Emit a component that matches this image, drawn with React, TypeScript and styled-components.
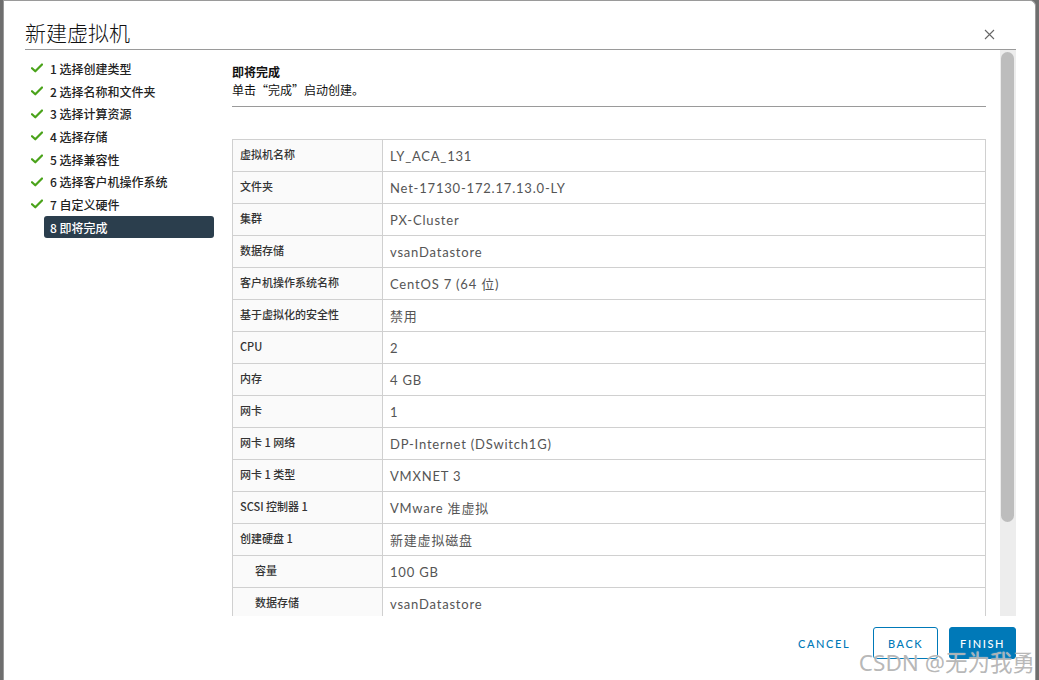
import React from "react";
import styled, { createGlobalStyle } from "styled-components";

const Global = createGlobalStyle`
  html, body { margin: 0; padding: 0; }
  body {
    background: #6e6e6e;
    font-family: "Noto Sans", "Noto Sans CJK SC", sans-serif;
    width: 1039px; height: 680px; overflow: hidden;
  }
`;

const Page = styled.div`
  display: flex;
  height: 680px;
  padding: 0 3px 0 3px;
  box-sizing: border-box;
`;

const Modal = styled.div`
  position: relative;
  flex: 1;
  background: #fff;
  border: 1px solid #9a9a9a;
  border-bottom: none;
  border-radius: 0 6px 0 0;
  display: flex;
  flex-direction: column;
  box-sizing: border-box;
  overflow: hidden;
`;

const Header = styled.div`
  margin: 0 19px 0 21px;
  height: 48px;
  border-bottom: 1px solid #9a9a9a;
  display: flex;
  align-items: flex-end;
  justify-content: space-between;
`;

const Title = styled.h1`
  margin: 0 0 2px 0;
  font-family: "Noto Sans CJK SC", sans-serif;
  font-weight: 300;
  font-size: 21px;
  line-height: 30px;
  color: #111;
`;

const Close = styled.button`
  border: none;
  background: none;
  padding: 0;
  margin: 0 20px 8px 0;
  width: 12px;
  height: 12px;
  display: flex;
  cursor: pointer;
`;

const Body = styled.div`
  display: flex;
  height: 566px;
  padding-right: 19px;
`;

const Nav = styled.ul`
  list-style: none;
  margin: 0;
  padding: 7px 0 0 27px;
  width: 183px;
  flex: none;
`;

const NavItem = styled.li<{ $active?: boolean }>`
  display: flex;
  align-items: center;
  gap: 7px;
  height: 22.7px;
  font-family: "Noto Sans CJK SC", sans-serif;
  font-size: 12px;
  font-weight: 500;
  color: ${(p) => (p.$active ? "#fff" : "#222")};
`;

const Check = styled.span`
  width: 12px;
  display: flex;
  justify-content: center;
`;

const ActiveLabel = styled.span`
  flex: 1;
  margin-left: -6px;
  background: #2b3e4d;
  border-radius: 3px;
  height: 22px;
  display: flex;
  align-items: center;
  padding-left: 6px;
`;

const Scroll = styled.div`
  flex: 1;
  overflow: hidden;
  padding: 0 14px 0 18px;
`;

const Track = styled.div`
  flex: none;
  width: 16px;
  background: #ededed;
  padding: 2px 2px 0 1px;
  box-sizing: border-box;
`;

const Thumb = styled.div`
  height: 470px;
  background: #bdbdbd;
  border-radius: 7px;
`;

const Intro = styled.div`
  padding-top: 13px;
  border-bottom: 1px solid #9a9a9a;
  padding-bottom: 7px;
  margin-bottom: 32px;
  font-family: "Noto Sans CJK SC", sans-serif;
  font-size: 12px;
  color: #111;
`;

const IntroTitle = styled.div`
  font-weight: 600;
  line-height: 18px;
`;

const IntroText = styled.div`
  line-height: 18px;
`;

const Table = styled.table`
  width: 100%;
  border-collapse: collapse;
  border: 1px solid #d0d0d0;
  margin-bottom: 20px;
`;

const Row = styled.tr`
  height: 32px;
`;

const Label = styled.td<{ $indent?: boolean }>`
  width: 150px;
  box-sizing: border-box;
  background: #fafafa;
  border: 1px solid #d0d0d0;
  padding: 0 0 4px ${(p) => (p.$indent ? "22px" : "7px")};
  font-family: "Noto Sans CJK SC", sans-serif;
  font-size: 11px;
  font-weight: 500;
  color: #333;
`;

const Value = styled.td`
  border: 1px solid #d0d0d0;
  padding: 0 0 0 7px;
  font-family: "Lato", "Noto Sans CJK SC", sans-serif;
  font-size: 13px;
  letter-spacing: 0.8px;
  color: #555;
`;

const Footer = styled.div`
  display: flex;
  justify-content: flex-end;
  align-items: flex-start;
  gap: 11px;
  padding: 11px 19px 0 0;
`;

const Btn = styled.button<{ $variant: "flat" | "outline" | "solid" }>`
  height: 32px;
  padding: 0 10px;
  border-radius: 3px;
  font-family: "Lato", "Noto Sans", sans-serif;
  font-size: 11px;
  font-weight: 500;
  letter-spacing: 1.6px;
  cursor: pointer;
  border: 1px solid ${(p) => (p.$variant === "flat" ? "transparent" : "#0079b8")};
  background: ${(p) => (p.$variant === "solid" ? "#0079b8" : "#fff")};
  color: ${(p) => (p.$variant === "solid" ? "#fff" : "#0079b8")};
  min-width: ${(p) => (p.$variant === "flat" ? "76px" : "65px")};
`;

const Watermark = styled.div`
  position: absolute;
  right: 0px;
  bottom: 4px;
  font-family: "Noto Sans", "Noto Sans CJK SC", sans-serif;
  font-size: 22.5px;
  line-height: 26px;
  color: rgba(165, 165, 165, 0.8);
  text-shadow: 0 0 1px rgba(255,255,255,0.9);
  pointer-events: none;
  white-space: nowrap;
`;

const steps = [
  "1 选择创建类型",
  "2 选择名称和文件夹",
  "3 选择计算资源",
  "4 选择存储",
  "5 选择兼容性",
  "6 选择客户机操作系统",
  "7 自定义硬件",
];

const rows: { k: string; v: string; indent?: boolean }[] = [
  { k: "虚拟机名称", v: "LY_ACA_131" },
  { k: "文件夹", v: "Net-17130-172.17.13.0-LY" },
  { k: "集群", v: "PX-Cluster" },
  { k: "数据存储", v: "vsanDatastore" },
  { k: "客户机操作系统名称", v: "CentOS 7 (64 位)" },
  { k: "基于虚拟化的安全性", v: "禁用" },
  { k: "CPU", v: "2" },
  { k: "内存", v: "4 GB" },
  { k: "网卡", v: "1" },
  { k: "网卡 1 网络", v: "DP-Internet (DSwitch1G)" },
  { k: "网卡 1 类型", v: "VMXNET 3" },
  { k: "SCSI 控制器 1", v: "VMware 准虚拟" },
  { k: "创建硬盘 1", v: "新建虚拟磁盘" },
  { k: "容量", v: "100 GB", indent: true },
  { k: "数据存储", v: "vsanDatastore", indent: true },
];

const CheckIcon = () => (
  <svg width="12" height="10" viewBox="0 0 12 10">
    <path d="M1 5.2 L4.3 8.3 L11 1.5" fill="none" stroke="#4aa31a" strokeWidth="2.2" strokeLinecap="round" strokeLinejoin="round" />
  </svg>
);

export default function App() {
  return (
    <>
      <Global />
      <Page>
        <Modal>
          <Header>
            <Title>新建虚拟机</Title>
            <Close aria-label="close">
              <svg width="11" height="11" viewBox="0 0 11 11">
                <path d="M1 1 L10 10 M10 1 L1 10" stroke="#666" strokeWidth="1.1" />
              </svg>
            </Close>
          </Header>
          <Body>
            <Nav>
              {steps.map((s) => (
                <NavItem key={s}>
                  <Check><CheckIcon /></Check>
                  <span>{s}</span>
                </NavItem>
              ))}
              <NavItem $active>
                <Check />
                <ActiveLabel>8 即将完成</ActiveLabel>
              </NavItem>
            </Nav>
            <Scroll>
              <Intro>
                <IntroTitle>即将完成</IntroTitle>
                <IntroText>单击“完成”启动创建。</IntroText>
              </Intro>
              <Table>
                <tbody>
                  {rows.map((r, i) => (
                    <Row key={i}>
                      <Label $indent={r.indent}>{r.k}</Label>
                      <Value>{r.v}</Value>
                    </Row>
                  ))}
                </tbody>
              </Table>
            </Scroll>
            <Track>
              <Thumb />
            </Track>
          </Body>
          <Footer>
            <Btn $variant="flat">CANCEL</Btn>
            <Btn $variant="outline">BACK</Btn>
            <Btn $variant="solid">FINISH</Btn>
          </Footer>
          <Watermark>CSDN @无为我勇</Watermark>
        </Modal>
      </Page>
    </>
  );
}
